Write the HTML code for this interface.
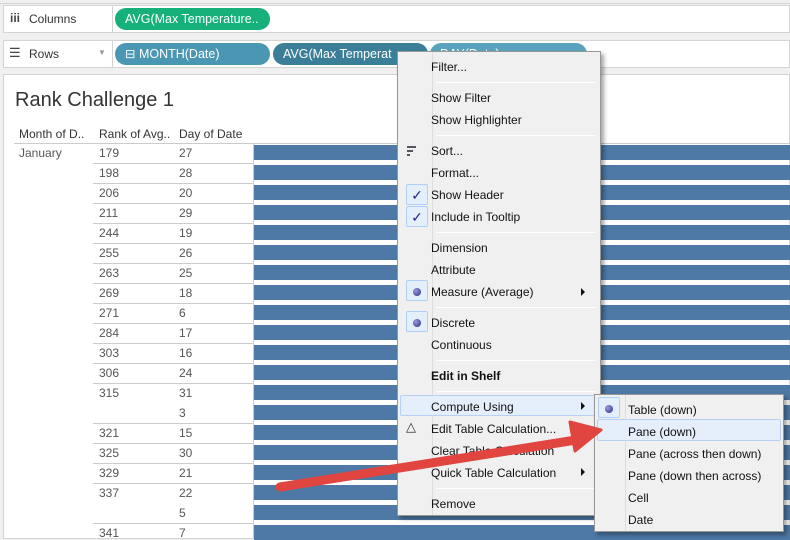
<!DOCTYPE html>
<html><head><style>
*{margin:0;padding:0;box-sizing:border-box}
body{width:790px;height:539px;overflow:hidden;background:#f0f0f0;font-family:"Liberation Sans",sans-serif;position:relative;font-size:12px}
.abs{position:absolute}
.shelf{position:absolute;left:3px;width:787px;height:28px;background:#fff;border:1px solid #d4d4d4}
.pill{position:absolute;height:22px;border-radius:11px;color:#fff;font-size:12.5px;line-height:22px;padding-left:10px;white-space:nowrap;overflow:hidden}
.t{position:absolute;color:#555;font-size:12px}
.bar{position:absolute;left:254px;width:540px;height:15px;background:#4e79a7}
.menu{position:absolute;background:#f0f0f0;border:1px solid #979797;box-shadow:3px 3px 4px rgba(0,0,0,.35)}
.mi{position:absolute;left:33px;font-size:12px;color:#111}
.sep{position:absolute;left:38px;right:4px;height:1px;background:#d7d7d7;border-bottom:1px solid #fff}
.chk{position:absolute;left:8px;width:22px;height:21px;border:1px solid #aecff7;background:#e4effc;border-radius:2px;color:#1a2e8c;text-align:center;font-size:14px;line-height:20px}
.dot{display:inline-block;width:8px;height:8px;border-radius:50%;background:radial-gradient(circle at 35% 35%,#9a9ae0,#2a2a80);margin-top:6px}
.arr{position:absolute;width:0;height:0;border-top:4px solid transparent;border-bottom:4px solid transparent;border-left:4px solid #111}
</style></head><body>
<div class="abs" style="left:0;top:0;width:790px;height:4px;background:#f0f0f0;border-bottom:1px solid #d4d4d4"></div>
<div class="shelf" style="top:5px"></div>
<div class="abs" style="left:112px;top:5px;width:1px;height:28px;background:#d4d4d4"></div>
<div class="t" style="left:10px;top:11px;color:#444;font-weight:bold">iii</div>
<div class="t" style="left:29px;top:12px;color:#333">Columns</div>
<div class="pill" style="left:115px;top:8px;width:155px;background:#16b07a">AVG(Max Temperature..</div>
<div class="shelf" style="top:40px"></div>
<div class="abs" style="left:112px;top:40px;width:1px;height:28px;background:#d4d4d4"></div>
<div class="t" style="left:9px;top:45px;color:#444;font-size:13px">☰</div>
<div class="t" style="left:29px;top:47px;color:#333">Rows</div>
<div class="t" style="left:98px;top:48px;color:#999;font-size:8px">▼</div>
<div class="pill" style="left:115px;top:43px;width:155px;background:#4a97b3">⊟ MONTH(Date)</div>
<div class="pill" style="left:273px;top:43px;width:155px;background:#3a7e98">AVG(Max Temperat</div>
<div class="pill" style="left:430px;top:43px;width:157px;background:#59a3be">DAY(Date)</div>
<div class="abs" style="left:3px;top:74px;width:787px;height:465px;background:#fff;border:1px solid #d4d4d4"></div>
<div class="t" style="left:15px;top:89px;font-size:20px;color:#333">Rank Challenge 1</div>
<div class="t" style="left:19px;top:127px;color:#333">Month of D..</div>
<div class="t" style="left:99px;top:127px;color:#333">Rank of Avg..</div>
<div class="t" style="left:179px;top:127px;color:#333">Day of Date</div>
<div class="abs" style="left:14px;top:143px;width:776px;height:1px;background:#ccc"></div>
<div class="t" style="left:19px;top:146px">January</div>
<div id="rows"></div>
<script>
var r=[["179","27"],["198","28"],["206","20"],["211","29"],["244","19"],["255","26"],["263","25"],["269","18"],["271","6"],["284","17"],["303","16"],["306","24"],["315","31"],["","3"],["321","15"],["325","30"],["329","21"],["337","22"],["","5"],["341","7"]];
var h="";
for(var i=0;i<r.length;i++){var y=143+i*20;
if(r[i][0]&&i>0)h+='<div class="abs" style="left:93px;top:'+y+'px;width:161px;height:1px;background:#ccc"></div>';
h+='<div class="t" style="left:99px;top:'+(y+3)+'px">'+r[i][0]+'</div><div class="t" style="left:179px;top:'+(y+3)+'px">'+r[i][1]+'</div><div class="bar" style="top:'+(y+2)+'px"></div>';}
document.getElementById("rows").innerHTML=h;
</script>
<div class="abs" style="left:253px;top:143px;width:1px;height:396px;background:#ccc"></div>
<div class="menu" style="left:397px;top:51px;width:204px;height:465px">
<div class="abs" style="left:34px;top:0;width:1px;height:463px;background:#ddd"></div>
<div class="mi" style="top:8px">Filter...</div>
<div class="sep" style="top:30px"></div>
<div class="mi" style="top:39px">Show Filter</div>
<div class="mi" style="top:61px">Show Highlighter</div>
<div class="sep" style="top:83px"></div>
<div class="abs" style="left:9px;top:94px;width:9px;height:2px;background:#556"></div>
<div class="abs" style="left:9px;top:98px;width:6px;height:2px;background:#556"></div>
<div class="abs" style="left:9px;top:102px;width:3px;height:2px;background:#556"></div>
<div class="mi" style="top:92px">Sort...</div>
<div class="mi" style="top:114px">Format...</div>
<div class="chk" style="top:132px">✓</div><div class="mi" style="top:136px">Show Header</div>
<div class="chk" style="top:154px">✓</div><div class="mi" style="top:158px">Include in Tooltip</div>
<div class="sep" style="top:180px"></div>
<div class="mi" style="top:189px">Dimension</div>
<div class="mi" style="top:211px">Attribute</div>
<div class="chk" style="top:228px"><span class="dot"></span></div><div class="mi" style="top:233px">Measure (Average)</div>
<div class="arr" style="left:183px;top:236px"></div>
<div class="sep" style="top:255px"></div>
<div class="chk" style="top:259px"><span class="dot"></span></div><div class="mi" style="top:264px">Discrete</div>
<div class="mi" style="top:286px">Continuous</div>
<div class="sep" style="top:308px"></div>
<div class="mi" style="top:317px;font-weight:bold">Edit in Shelf</div>
<div class="sep" style="top:339px"></div>
<div class="abs" style="left:2px;top:343px;width:198px;height:21px;background:#e5eefb;border:1px solid #b6d1f5;border-radius:2px"></div>
<div class="mi" style="top:348px">Compute Using</div>
<div class="arr" style="left:183px;top:350px"></div>
<div class="t" style="left:8px;top:367px;color:#333;font-size:13px">△</div>
<div class="mi" style="top:370px">Edit Table Calculation...</div>
<div class="mi" style="top:392px">Clear Table Calculation</div>
<div class="mi" style="top:414px">Quick Table Calculation</div>
<div class="arr" style="left:183px;top:416px"></div>
<div class="sep" style="top:436px"></div>
<div class="mi" style="top:445px">Remove</div>
</div>
<div class="menu" style="left:594px;top:394px;width:190px;height:138px">
<div class="abs" style="left:30px;top:0;width:1px;height:136px;background:#ddd"></div>
<div class="chk" style="top:2px;left:3px"><span class="dot"></span></div>
<div class="mi" style="top:8px">Table (down)</div>
<div class="abs" style="left:2px;top:24px;width:184px;height:22px;background:#e5eefb;border:1px solid #b6d1f5;border-radius:2px"></div>
<div class="mi" style="top:30px">Pane (down)</div>
<div class="mi" style="top:52px">Pane (across then down)</div>
<div class="mi" style="top:74px">Pane (down then across)</div>
<div class="mi" style="top:96px">Cell</div>
<div class="mi" style="top:118px">Date</div>
</div>
<svg class="abs" style="left:0;top:0" width="790" height="539">
<path d="M280 487 L576 440" stroke="#e0453f" stroke-width="9" stroke-linecap="round"/>
<polygon points="570,422 601,430 575,451" fill="#e0453f" stroke="#e0453f" stroke-width="3" stroke-linejoin="round"/>
</svg>
</body></html>
